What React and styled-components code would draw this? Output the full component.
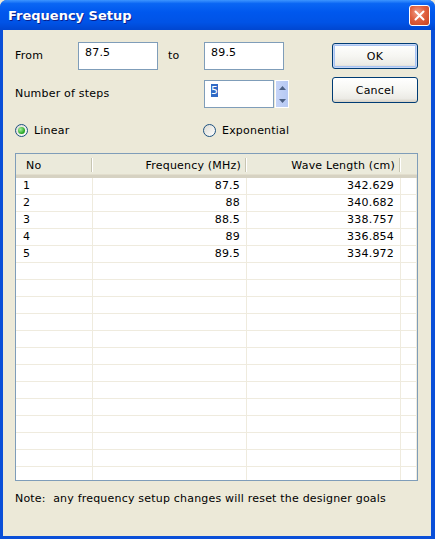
import React from 'react'
import styled, { createGlobalStyle } from 'styled-components'

const GlobalStyle = createGlobalStyle`
  html, body { margin: 0; padding: 0; background: #ECE9D8; }
  body { font-family: "DejaVu Sans", Tahoma, sans-serif; font-size: 11px; letter-spacing: 0.2px; color: #000; }
`;

const Window = styled.div`
  width: 435px;
  height: 539px;
  box-sizing: border-box;
  display: flex;
  flex-direction: column;
  background: #0A4FD8;
  border-radius: 7px 7px 0 0;
  overflow: hidden;
`;

const TitleBar = styled.div`
  height: 30px;
  flex-shrink: 0;
  display: flex;
  align-items: center;
  justify-content: space-between;
  padding: 0 5px 0 8px;
  box-sizing: border-box;
  background: linear-gradient(to bottom, #3D95FF 0%, #0A66F4 12%, #0058EE 40%, #0053E6 75%, #0046D0 100%);
`;

const Title = styled.span`
  color: #fff;
  font-weight: bold;
  font-size: 13px;
  letter-spacing: 0;
  text-shadow: 1px 1px 0 #0A1E8C;
`;

const CloseButton = styled.div`
  width: 21px;
  height: 21px;
  box-sizing: border-box;
  border: 1px solid #fff;
  border-radius: 3px;
  background: radial-gradient(circle at 40% 35%, #F0A08A 0%, #E0603F 45%, #C8421E 100%);
  display: flex;
  align-items: center;
  justify-content: center;
`;

const Body = styled.div`
  flex: 1;
  margin: 0 4px 3px 3px;
  background: #ECE9D8;
  padding: 12px 13px 0 12px;
  display: flex;
  flex-direction: column;
`;

const Top = styled.div`
  display: flex;
  justify-content: space-between;
`;

const Form = styled.div`
  display: flex;
  flex-direction: column;
`;

const Row = styled.div`
  display: flex;
  align-items: center;
  height: ${p => p.h}px;
  margin-top: ${p => p.mt || 0}px;
`;

const Label = styled.span`
  width: ${p => p.w}px;
  padding-left: ${p => p.pl || 0}px;
  box-sizing: border-box;
  flex-shrink: 0;
  line-height: 14px;
`;

const TextBox = styled.div`
  width: ${p => p.w}px;
  height: 28px;
  box-sizing: border-box;
  border: 1px solid #7F9DB9;
  background: #fff;
  padding: 3px 0 0 6px;
  line-height: 14px;
`;

const Selected = styled.span`
  background: #316AC5;
  color: #fff;
`;

const Spin = styled.div`
  width: 14px;
  height: 28px;
  margin-left: 1px;
  box-sizing: border-box;
  border: 1px solid #fff;
  background: linear-gradient(to right, #C6D4F7, #B6C9F4);
  display: flex;
  flex-direction: column;
  align-items: center;
  justify-content: space-between;
  padding: 5px 0 4px;
`;

const Buttons = styled.div`
  display: flex;
  flex-direction: column;
  gap: 8px;
  padding-top: 1px;
`;

const Button = styled.div`
  width: 86px;
  height: 26px;
  box-sizing: border-box;
  border: 1px solid #003C74;
  border-radius: 3px;
  background: linear-gradient(to bottom, #FFFFFF 0%, #F6F6F2 50%, #ECEBE6 85%, #D6D0C5 100%);
  display: flex;
  align-items: center;
  justify-content: center;
  box-shadow: ${p => p.$default ? 'inset 0 0 0 1px #C6D7F7, inset 0 0 0 2px #A8C3F2' : 'none'};
`;

const RadioRow = styled.div`
  display: flex;
  align-items: center;
  height: 14px;
  margin-top: 15px;
`;

const Radio = styled.label`
  display: flex;
  align-items: center;
  gap: 6px;
  width: ${p => p.w}px;
`;

const Circle = styled.span`
  width: 13px;
  height: 13px;
  box-sizing: border-box;
  border: 1px solid #1C5180;
  border-radius: 50%;
  background: linear-gradient(135deg, #DCDBD3, #FFFFFF);
  display: flex;
  align-items: center;
  justify-content: center;
  &::after {
    content: '';
    display: ${p => p.$on ? 'block' : 'none'};
    width: 7px;
    height: 7px;
    border-radius: 50%;
    background: radial-gradient(circle at 35% 35%, #A6F49C, #21A121 70%);
  }
`;

const List = styled.div`
  margin-top: 16px;
  width: 403px;
  height: 328px;
  box-sizing: border-box;
  border: 1px solid #7F9DB9;
  background: #fff;
  overflow: hidden;
`;

const Grid = styled.div`
  display: grid;
  grid-template-columns: 77px 154px 154px 16px;
`;

const Head = styled.div`
  height: 24px;
  box-sizing: border-box;
  background: #EBEADB;
  border-bottom: 3px solid #D6D2C2;
  box-shadow: inset 0 -1px 0 #E2DECD;
  display: flex;
  align-items: center;
  justify-content: ${p => p.$right ? 'flex-end' : 'flex-start'};
  padding: 1px ${p => p.$right ? 6 : 0}px 0 ${p => p.$right ? 0 : 10}px;
  position: relative;
  &::after {
    content: '';
    display: ${p => p.$last ? 'none' : 'block'};
    position: absolute;
    right: 1px;
    top: 4px;
    bottom: 3px;
    width: 1px;
    background: #C7C5B2;
    box-shadow: 1px 0 0 #fff;
  }
`;

const Cell = styled.div`
  height: 17px;
  box-sizing: border-box;
  border-bottom: 1px solid #EFEBDE;
  border-right: 1px solid #EFEBDE;
  padding: 0 ${p => p.$right ? 6 : 0}px 0 ${p => p.$right ? 0 : 7}px;
  text-align: ${p => p.$right ? 'right' : 'left'};
  line-height: 16px;
`;

const Note = styled.div`
  margin-top: 11px;
  white-space: pre;
`;

const rows = [
  ['1', '87.5', '342.629'],
  ['2', '88', '340.682'],
  ['3', '88.5', '338.757'],
  ['4', '89', '336.854'],
  ['5', '89.5', '334.972'],
];

const Arrow = ({ up }) => (
  <svg width="7" height="4" viewBox="0 0 7 4">
    <path d={up ? 'M0 4 L3.5 0 L7 4 Z' : 'M0 0 L3.5 4 L7 0 Z'} fill="#4D6185" />
  </svg>
);

const App = () => {
  const all = [...rows];
  while (all.length < 19) all.push(['', '', '']);

  return (
    <>
      <GlobalStyle />
      <Window>
        <TitleBar>
          <Title>Frequency Setup</Title>
          <CloseButton>
            <svg width="11" height="11" viewBox="0 0 11 11">
              <path d="M1.5 1.5 L9.5 9.5 M9.5 1.5 L1.5 9.5" stroke="#fff" strokeWidth="2" strokeLinecap="round" />
            </svg>
          </CloseButton>
        </TitleBar>
        <Body>
          <Top>
            <Form>
              <Row h={28}>
                <Label w={63}>From</Label>
                <TextBox w={80}>87.5</TextBox>
                <Label w={46} pl={10}>to</Label>
                <TextBox w={80}>89.5</TextBox>
              </Row>
              <Row h={28} mt={10}>
                <Label w={189}>Number of steps</Label>
                <TextBox w={70}><Selected>5</Selected></TextBox>
                <Spin>
                  <Arrow up />
                  <Arrow />
                </Spin>
              </Row>
              <RadioRow>
                <Radio w={188}><Circle $on />Linear</Radio>
                <Radio><Circle />Exponential</Radio>
              </RadioRow>
            </Form>
            <Buttons>
              <Button $default>OK</Button>
              <Button>Cancel</Button>
            </Buttons>
          </Top>
          <List>
            <Grid>
              <Head>No</Head>
              <Head $right>Frequency (MHz)</Head>
              <Head $right>Wave Length (cm)</Head>
              <Head $last />
              {all.map((r, i) => (
                <React.Fragment key={i}>
                  <Cell>{r[0]}</Cell>
                  <Cell $right>{r[1]}</Cell>
                  <Cell $right>{r[2]}</Cell>
                  <Cell />
                </React.Fragment>
              ))}
            </Grid>
          </List>
          <Note>Note:  any frequency setup changes will reset the designer goals</Note>
        </Body>
      </Window>
    </>
  )
}

export default App
